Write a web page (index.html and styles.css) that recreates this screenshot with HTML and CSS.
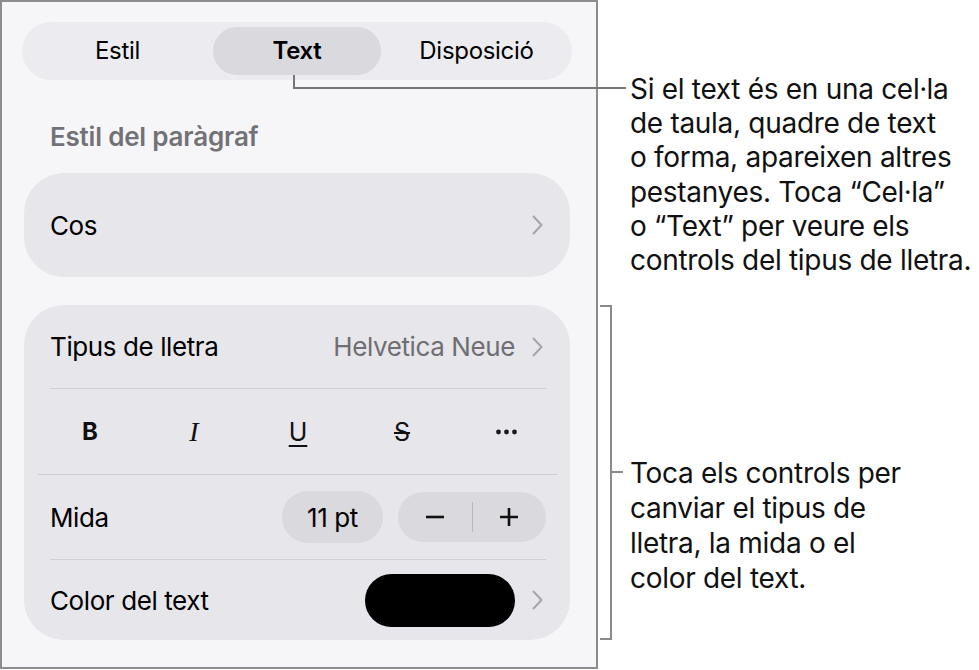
FILE: index.html
```html
<!DOCTYPE html>
<html lang="ca">
<head>
<meta charset="utf-8">
<title>Format del text</title>
<link rel="stylesheet" href="styles.css">
</head>
<body>
<div class="page">
  <section class="panel">
    <nav class="tabs">
      <span class="tab">Estil</span>
      <span class="tab active">Text</span>
      <span class="tab">Disposició</span>
    </nav>

    <h2 class="section-title">Estil del paràgraf</h2>

    <div class="card card-single">
      <div class="row">
        <span class="label">Cos</span>
        <svg class="chevron" viewBox="0 0 11 20"><path d="M1.5 1.5 L9.5 10 L1.5 18.5"/></svg>
      </div>
    </div>

    <div class="card card-font">
      <div class="row row-font">
        <span class="label">Tipus de lletra</span>
        <span class="value">Helvetica Neue</span>
        <svg class="chevron" viewBox="0 0 11 20"><path d="M1.5 1.5 L9.5 10 L1.5 18.5"/></svg>
      </div>
      <div class="row row-styles">
        <span class="style-btn bold">B</span>
        <span class="style-btn italic">I</span>
        <span class="style-btn underline">U</span>
        <span class="style-btn strike">S</span>
        <span class="style-btn more">
          <svg viewBox="0 0 22 6"><circle cx="3" cy="3" r="2.4"/><circle cx="11" cy="3" r="2.4"/><circle cx="19" cy="3" r="2.4"/></svg>
        </span>
      </div>
      <div class="row row-size">
        <span class="label">Mida</span>
        <span class="size-pill">11 pt</span>
        <span class="stepper">
          <span class="step"><svg viewBox="0 0 20 20"><path d="M1 10 H19"/></svg></span>
          <span class="step-sep"></span>
          <span class="step"><svg viewBox="0 0 20 20"><path d="M1 10 H19 M10 1 V19"/></svg></span>
        </span>
      </div>
      <div class="row row-color">
        <span class="label">Color del text</span>
        <span class="swatch"></span>
        <svg class="chevron" viewBox="0 0 11 20"><path d="M1.5 1.5 L9.5 10 L1.5 18.5"/></svg>
      </div>
    </div>
  </section>

  <aside class="notes">
    <p class="note note-tabs">Si el text és en una cel<span class="dot">·</span>la<br>de taula, quadre de text<br>o forma, apareixen altres<br>pestanyes. Toca “Cel<span class="dot">·</span>la”<br>o “Text” per veure els<br>controls del tipus de lletra.</p>
    <p class="note note-controls">Toca els controls per<br>canviar el tipus de<br>lletra, la mida o el<br>color del text.</p>
  </aside>

  <span class="leader leader-tabs"></span>
  <span class="leader bracket"></span>
  <span class="leader bracket-tick"></span>
</div>
</body>
</html>
```

FILE: styles.css
```css
* { box-sizing: border-box; }

html, body {
  margin: 0;
  background: #ffffff;
}

body {
  font-family: Inter, "Noto Sans", "Liberation Sans", sans-serif;
  font-feature-settings: "calt" 0;
  color: #000;
}

.page {
  position: relative;
  display: flex;
  align-items: flex-start;
  width: 979px;
  height: 670px;
}

/* Inspector panel */
.panel {
  flex-shrink: 0;
  width: 598px;
  height: 669px;
  border: 2px solid #8d8d8f;
  background: #f6f6f9;
  padding: 20px 24px 0 20px;
  display: flex;
  flex-direction: column;
}

.panel > * { flex-shrink: 0; }

.tabs {
  height: 58px;
  border-radius: 29px;
  background: #ececf0;
  display: grid;
  grid-template-columns: 1fr 168px 1fr;
  align-items: center;
}

.tab {
  text-align: center;
  font-size: 24px;
  font-weight: 400;
  letter-spacing: -0.3px;
  line-height: 48px;
}

.tab.active {
  background: #dadade;
  border-radius: 24px;
  font-weight: 600;
}

.section-title {
  margin: 42px 0 0 28px;
  font-size: 26px;
  font-weight: 600;
  color: #727276;
  line-height: 30px;
  letter-spacing: -0.2px;
}

.card {
  margin: 0 2px;
  background: #e6e6eb;
  border-radius: 40px;
  padding: 0 24px 0 26px;
}

.card-single {
  margin-top: 21px;
  height: 104px;
  display: flex;
  align-items: center;
}

.card-single .row { flex: 1; }

.card-font {
  margin-top: 28px;
  height: 335px;
  display: flex;
  flex-direction: column;
}

.row {
  display: flex;
  align-items: center;
}

.label {
  font-size: 26px;
  letter-spacing: -0.4px;
  flex: 1;
}

.value {
  font-size: 26px;
  color: #6e6e73;
  letter-spacing: -0.4px;
}

.chevron {
  width: 11px;
  height: 20px;
  margin-left: 17px;
  margin-right: 3px;
  fill: none;
  stroke: #a3a3a8;
  stroke-width: 1.9;
  stroke-linecap: round;
  stroke-linejoin: round;
}

.row-font,
.row-styles,
.row-size {
  border-bottom: 1px solid #cfcfd4;
}

.row-font { height: 84px; }
.row-styles { height: 86px; }
.row-size { height: 85px; }
.row-color { flex: 1; }

/* Bold / italic / underline / strike / more */
.row-styles {
  display: grid;
  grid-template-columns: repeat(5, 104px);
  margin-left: -12px;
  margin-right: -12px;
  align-items: center;
  justify-items: center;
}

.style-btn {
  font-size: 25px;
  line-height: 28px;
  color: #111;
}

.style-btn.bold {
  font-weight: 700;
  font-size: 24px;
}

.style-btn.italic {
  font-family: "Liberation Serif", "DejaVu Serif", serif;
  font-style: italic;
  font-size: 28px;
}

.style-btn.underline {
  text-decoration: underline;
  text-decoration-thickness: 2px;
  text-underline-offset: 4px;
  font-weight: 400;
}

.style-btn.strike {
  text-decoration: line-through;
  text-decoration-thickness: 1.5px;
}

.style-btn.more svg {
  width: 23px;
  height: 6px;
  fill: #1a1a1a;
  display: block;
}

/* Size controls */
.size-pill {
  width: 101px;
  height: 52px;
  border-radius: 26px;
  background: #dadade;
  display: flex;
  align-items: center;
  justify-content: center;
  font-size: 26px;
  letter-spacing: -0.4px;
}

.stepper {
  margin-left: 15px;
  width: 148px;
  height: 50px;
  border-radius: 25px;
  background: #dadade;
  display: flex;
  align-items: center;
}

.step {
  flex: 1;
  display: flex;
  justify-content: center;
}

.step svg {
  width: 20px;
  height: 20px;
  fill: none;
  stroke: #111;
  stroke-width: 2.6;
}

.step-sep {
  width: 1px;
  height: 30px;
  background: #b8b8bd;
}

/* Colour well */
.swatch {
  width: 150px;
  height: 53px;
  border-radius: 27px;
  background: #000;
}

/* Annotations */
.notes {
  padding: 71px 0 0 32px;
  display: flex;
  flex-direction: column;
}

.note {
  margin: 0;
  font-size: 28px;
  line-height: 34px;
  letter-spacing: -0.3px;
  color: #111;
  white-space: nowrap;
}

.note .dot {
  font-family: "Noto Sans", "Liberation Sans", sans-serif;
}

.note-controls {
  margin-top: 179px;
  line-height: 35px;
}

/* Callout lines */
.leader {
  position: absolute;
  display: block;
}

.leader-tabs {
  left: 293px;
  top: 75px;
  width: 333px;
  height: 14px;
  border-left: 2.5px solid #767676;
  border-bottom: 2.5px solid #767676;
}

.bracket {
  left: 600px;
  top: 305px;
  width: 12px;
  height: 335px;
  border-top: 2.5px solid #8a8a8a;
  border-right: 2.5px solid #8a8a8a;
  border-bottom: 2.5px solid #8a8a8a;
}

.bracket-tick {
  left: 612px;
  top: 471px;
  width: 11px;
  height: 2px;
  background: #8a8a8a;
}
```
